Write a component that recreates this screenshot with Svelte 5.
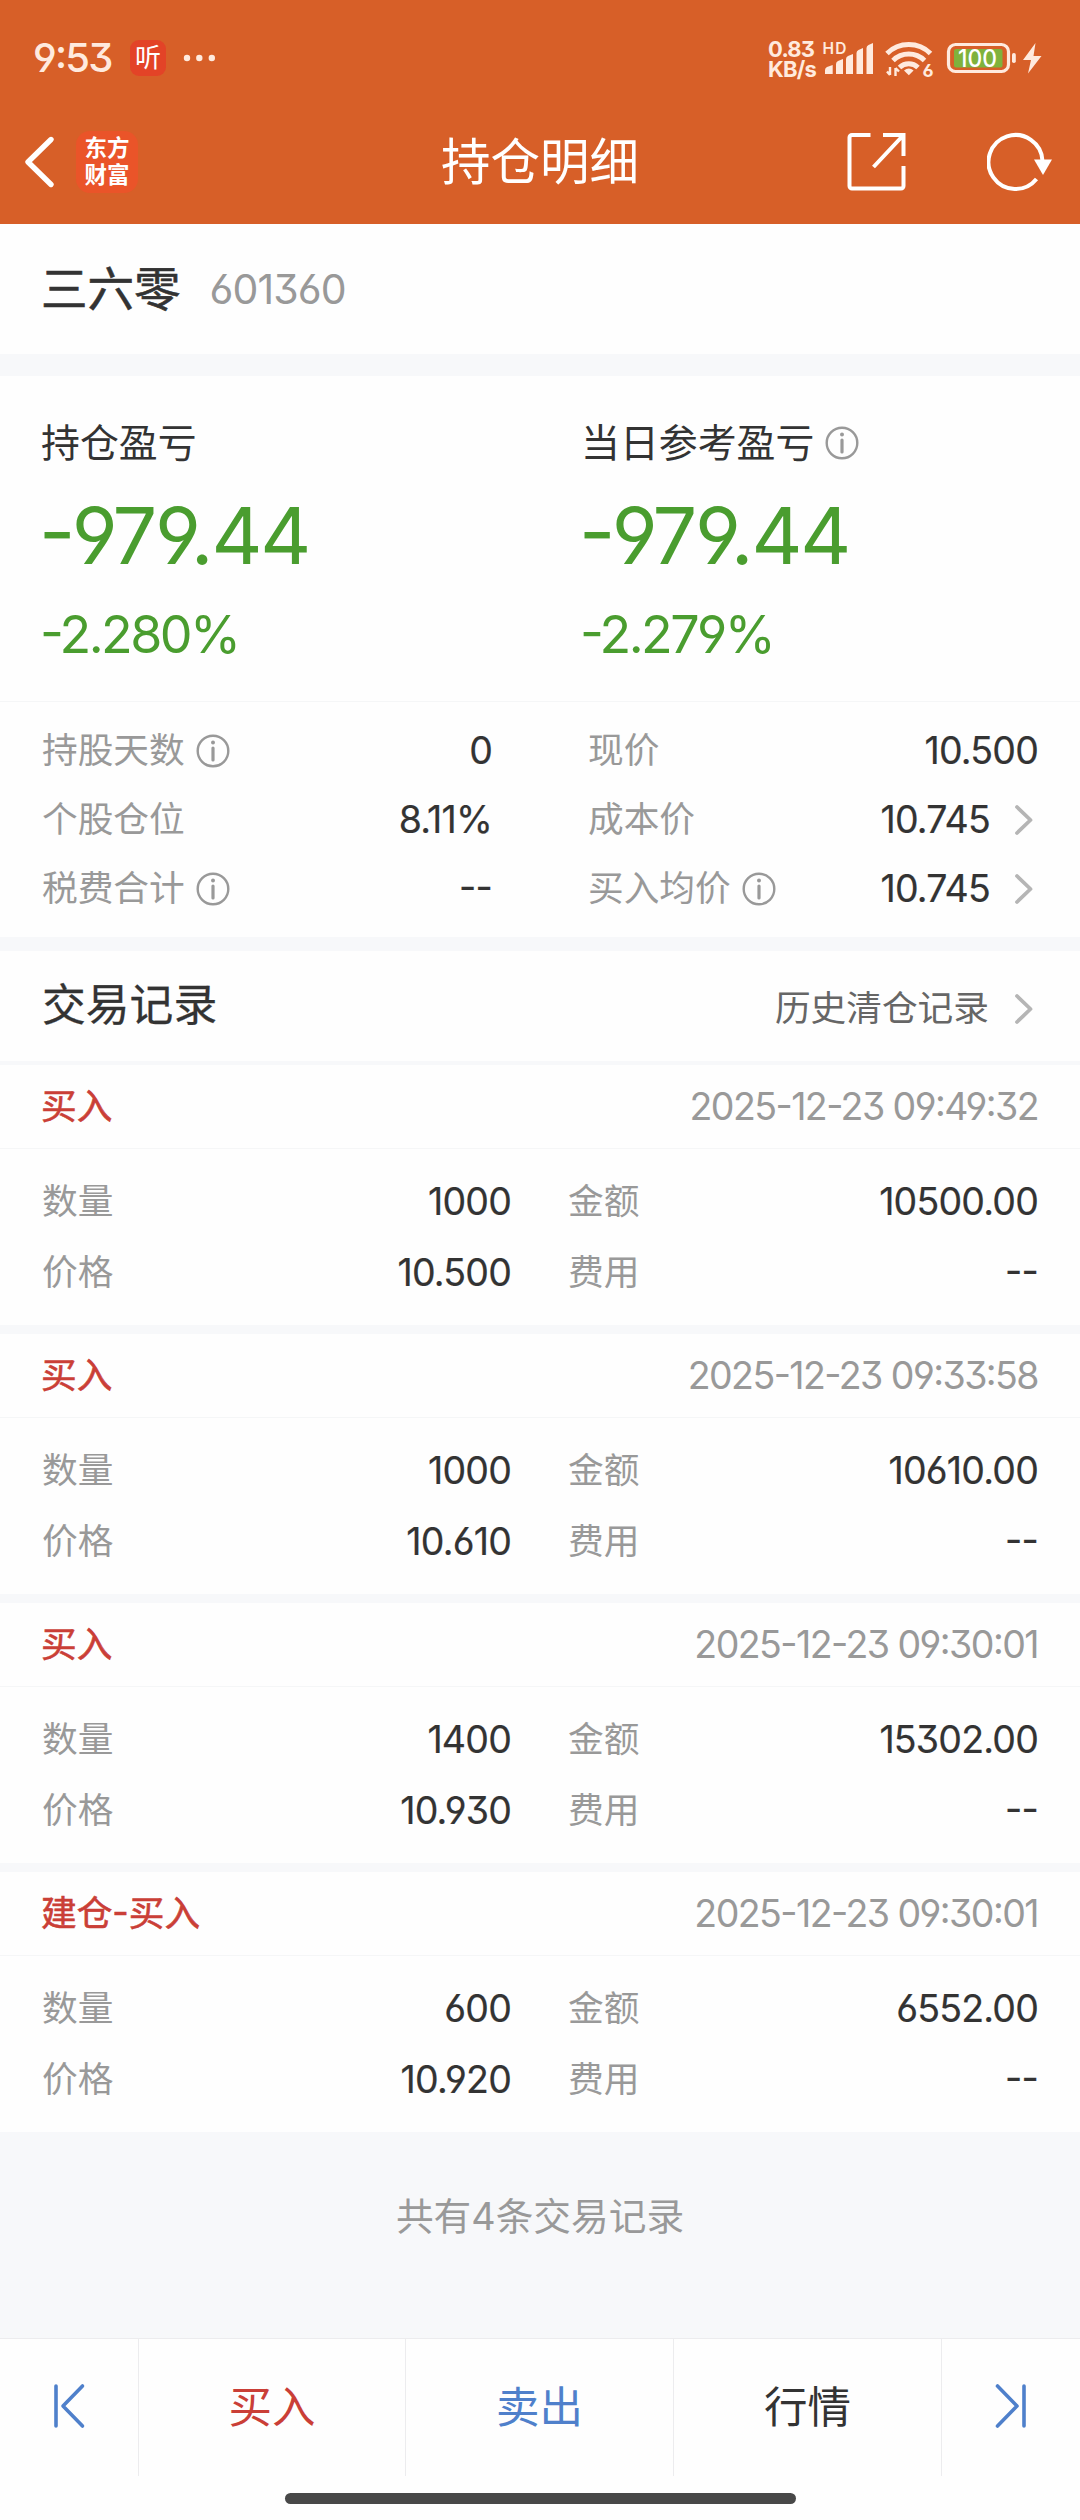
<script>
    const details = [
        {label: "持股天数", value: "0", info: true},
        {label: "现价", value: "10.500"},
        {label: "个股仓位", value: "8.11%"},
        {label: "成本价", value: "10.745", arrow: true},
        {label: "税费合计", value: "--", info: true},
        {label: "买入均价", value: "10.745", info: true, arrow: true},
    ];

    const records = [
        {type: "买入", time: "2025-12-23 09:49:32", amount: "1000", money: "10500.00", price: "10.500", fee: "--"},
        {type: "买入", time: "2025-12-23 09:33:58", amount: "1000", money: "10610.00", price: "10.610", fee: "--"},
        {type: "买入", time: "2025-12-23 09:30:01", amount: "1400", money: "15302.00", price: "10.930", fee: "--"},
        {type: "建仓-买入", time: "2025-12-23 09:30:01", amount: "600", money: "6552.00", price: "10.920", fee: "--"},
    ];
</script>

{#snippet infoIcon()}
    <svg class="info" width="34" height="34" viewBox="0 0 34 34">
        <circle cx="17" cy="17" r="15.3" fill="none" stroke="#999" stroke-width="2.4"/>
        <circle cx="17" cy="8.6" r="2" fill="#999"/>
        <path d="M17 14v12" stroke="#999" stroke-width="3.2" stroke-linecap="round"/>
    </svg>
{/snippet}

{#snippet chevron()}
    <svg class="chevron" width="20" height="32" viewBox="0 0 20 32">
        <path d="M3 3l13.5 13L3 29" fill="none" stroke="#b5b5b5" stroke-width="3.8" stroke-linecap="round" stroke-linejoin="round"/>
    </svg>
{/snippet}

<div class="page">
    <header>
        <div class="status">
            <span class="clock">9:53</span>
            <span class="listen">听</span>
            <svg class="dots" width="32" height="8" viewBox="0 0 32 8" fill="#ffeade">
                <circle cx="4" cy="4" r="3.2"/>
                <circle cx="16.3" cy="4" r="3.2"/>
                <circle cx="28.8" cy="4" r="3.2"/>
            </svg>
            <div class="speed">0.83<br>KB/s</div>
            <svg class="signals" width="226" height="44" viewBox="820 36 226 44" fill="#ffeade">
                <text x="822.5" y="54.3" font-size="15.5" font-weight="600" textLength="24">HD</text>
                <path d="M825 74v-4q0-2 2-3l5.700-2v9z"/>
                <path d="M836 74v-10q0-2 2-3l5-2v15z"/>
                <path d="M846 74v-15q0-2 2-3l5-2v20z"/>
                <path d="M856.500 74v-21q0-2 2-3l4.500-2v26z"/>
                <path d="M866.500 74v-26q0-2 2-3l4.500-2v31z"/>
                <g fill="none" stroke="#ffeade" stroke-width="5">
                    <path d="M887 53.500a31 31 0 0 1 43.500 0"/>
                    <path d="M893 60.500a22.500 22.500 0 0 1 31.500 0"/>
                    <path d="M899.500 67.500a13.500 13.500 0 0 1 18.500 0"/>
                </g>
                <path d="M904 70.500q4.800-4 9.600 0l-4.800 4.700z"/>
                <path d="M890 67v8M887 71.500l3 3.500M895.500 76v-8M895.500 68l3.500 3.500" fill="none" stroke="#ffeade" stroke-width="2.400"/>
                <text x="922.500" y="76.500" font-size="18" font-weight="700" stroke="#d75f28" stroke-width="3" paint-order="stroke">6</text>
                <rect x="948.500" y="44.500" width="60" height="27" rx="7" fill="none" stroke="#ffeade" stroke-width="3.200"/>
                <rect x="954" y="49" width="48.500" height="18.500" rx="2" fill="#7fb23c"/>
                <text x="958" y="67" font-size="24" font-weight="500" fill="#fff" textLength="39" lengthAdjust="spacingAndGlyphs">100</text>
                <rect x="1012" y="53" width="3.800" height="10" rx="1.800"/>
                <path d="M1035.500 43l-12.500 17h8l-3 13.500 13.500-17.500h-8z"/>
            </svg>
        </div>
        <div class="nav">
            <svg class="back" width="36" height="60" viewBox="0 0 36 60">
                <path d="M31 7.500L8 30l23 22.500" fill="none" stroke="#fff" stroke-width="5.400" stroke-linecap="round" stroke-linejoin="round"/>
            </svg>
            <div class="logo"><span>东方</span><span>财富</span></div>
            <h1>持仓明细</h1>
            <svg class="export" width="60" height="60" viewBox="0 0 60 60" fill="none" stroke="#fff" stroke-width="4">
                <path d="M24.500 3H6a2.500 2.500 0 0 0-2.500 2.500v48.500a2.500 2.500 0 0 0 2.500 2.500h49a2.500 2.500 0 0 0 2.500-2.500V34"/>
                <path d="M37 3h20.500V24M57.500 3L27.500 35"/>
            </svg>
            <svg class="refresh" width="68" height="60" viewBox="0 0 68 60">
                <path d="M55.500 29A27 27 0 1 0 49.500 47" fill="none" stroke="#fff" stroke-width="4"/>
                <path d="M47 27.500h18l-9 15.500z" fill="#fff"/>
            </svg>
        </div>
    </header>

    <section class="stock">
        <span class="name">三六零</span>
        <span class="code">601360</span>
    </section>

    <section class="profits">
        <div class="profit">
            <div class="caption">持仓盈亏</div>
            <div class="sum">-979.44</div>
            <div class="percent">-2.280%</div>
        </div>
        <div class="profit">
            <div class="caption">当日参考盈亏{@render infoIcon()}</div>
            <div class="sum">-979.44</div>
            <div class="percent">-2.279%</div>
        </div>
    </section>

    <section class="details">
        {#each details as item}
            <div class="detail">
                <span class="label">{item.label}</span>
                {#if item.info}{@render infoIcon()}{/if}
                <span class="value">{item.value}</span>
                {#if item.arrow}{@render chevron()}{/if}
            </div>
        {/each}
    </section>

    <section class="history">
        <h2>交易记录</h2>
        <span class="more">历史清仓记录</span>
        {@render chevron()}
    </section>

    {#each records as record}
        <section class="record">
            <div class="head">
                <span class="type">{record.type}</span>
                <span class="time">{record.time}</span>
            </div>
            <div class="cells">
                <span class="label">数量</span><span class="value">{record.amount}</span>
                <span class="label second">金额</span><span class="value">{record.money}</span>
                <span class="label">价格</span><span class="value">{record.price}</span>
                <span class="label second">费用</span><span class="value">{record.fee}</span>
            </div>
        </section>
    {/each}

    <div class="total">共有4条交易记录</div>

    <footer>
        <div class="tabs">
            <div class="tab">
                <svg width="34" height="48" viewBox="0 0 34 48" fill="none" stroke="#4f80cb" stroke-width="3.600" stroke-linecap="round" stroke-linejoin="round">
                    <path d="M4 4v40M30.500 4L11 24l19.500 20"/>
                </svg>
            </div>
            <div class="tab buy">买入</div>
            <div class="tab sell">卖出</div>
            <div class="tab">行情</div>
            <div class="tab">
                <svg width="34" height="48" viewBox="0 0 34 48" fill="none" stroke="#4f80cb" stroke-width="3.600" stroke-linecap="round" stroke-linejoin="round">
                    <path d="M30 4v40M3.500 4L23 24L3.500 44"/>
                </svg>
            </div>
        </div>
        <div class="home"></div>
    </footer>
</div>

<style>
    :global(body) {
        background: #f7f8fa;
    }

    .page {
        width: 1080px;
        height: 2520px;
        display: flex;
        flex-direction: column;
        overflow: hidden;
        background: #f7f8fa;
        color: #333;
        font-family: "Inter", "Noto Sans CJK SC", sans-serif;
        font-feature-settings: "cv03", "cv04", "cv09", "case";
        font-size: 35.7px;
        line-height: 1;
    }

    section, header, footer {
        box-sizing: border-box;
        flex: none;
    }

    section {
        background: #fefefe;
    }

    header {
        height: 224px;
        background: #d75f28;
        color: #fff;
    }

    .status {
        height: 116px;
        display: flex;
        align-items: center;
        padding-left: 33px;
        color: #ffeade;
    }

    .clock {
        width: 97px;
        font-size: 40px;
        font-weight: 500;
        letter-spacing: -1.8px;
    }

    .listen {
        width: 36px;
        height: 36px;
        border-radius: 9px;
        background: #e34327;
        color: #fff;
        font-size: 26px;
        line-height: 36px;
        text-align: center;
    }

    .dots {
        margin-left: 17px;
    }

    .speed {
        width: 52px;
        margin-left: 553px;
        font-size: 22px;
        font-weight: 700;
        line-height: 19.5px;
        letter-spacing: -0.8px;
        padding-top: 3px;
    }

    .signals {
        flex: none;
    }

    .nav {
        height: 92px;
        display: grid;
        grid-template-columns: 56px 62px 1fr 60px 81px 68px 25px;
        align-items: center;
    }

    .back {
        margin-left: 20px;
    }

    .logo {
        width: 62px;
        height: 62px;
        margin-left: 20px;
        padding-top: 3px;
        box-sizing: border-box;
        border-radius: 14px;
        background: #ea5429;
        display: flex;
        flex-direction: column;
        align-items: center;
        font-size: 22.5px;
        font-weight: 700;
        line-height: 27px;
    }

    h1 {
        margin: 0;
        grid-column: 3;
        font-size: 49.5px;
        font-weight: 400;
        padding: 2px 0 0 323px;
    }

    .refresh {
        grid-column: 6;
    }

    .stock {
        height: 130px;
        display: flex;
        align-items: center;
        padding-left: 41px;
    }

    .name {
        font-size: 46.5px;
        -webkit-text-stroke: 0.6px #333;
    }

    .code {
        margin-left: 29px;
        padding-top: 1px;
        font-size: 41px;
        color: #999;
        letter-spacing: -0.9px;
    }

    .profits {
        height: 326px;
        margin-top: 22px;
        padding-top: 40px;
        display: grid;
        grid-template-columns: 1fr 1fr;
        border-bottom: 1px solid #f5f6f7;
    }

    .profit {
        padding-left: 41px;
    }

    .caption {
        display: flex;
        align-items: center;
        height: 53px;
        padding-top: 1px;
        box-sizing: border-box;
        font-size: 38.9px;
    }

    .info {
        margin-left: 11px;
        flex: none;
    }

    .sum {
        margin: 11px 0 0 -2px;
        font-size: 79px;
        line-height: 110px;
        color: #4a9d2f;
        letter-spacing: -2.2px;
    }

    .percent {
        margin: 10px 0 0 -1px;
        font-size: 52px;
        line-height: 70px;
        color: #4a9d2f;
        letter-spacing: -2.6px;
    }

    .details {
        height: 235px;
        padding: 14px 42px 0;
        display: grid;
        grid-template-columns: 450px 450px;
        grid-auto-rows: 69px;
        justify-content: space-between;
    }

    .detail {
        display: flex;
        align-items: center;
    }

    .label {
        color: #999;
    }

    .value {
        margin-left: auto;
        padding-top: 1px;
        font-size: 37.5px;
        letter-spacing: -0.8px;
        -webkit-text-stroke: 0.2px #333;
    }

    .chevron {
        flex: none;
        margin: 0 4px 0 24px;
    }

    .history {
        height: 110px;
        margin-top: 14px;
        padding: 0 42px;
        display: flex;
        align-items: center;
    }

    h2 {
        margin: 0 auto 0 0;
        font-size: 43.8px;
        font-weight: 400;
        -webkit-text-stroke: 0.3px #333;
    }

    .more {
        color: #666;
        padding-top: 5px;
    }

    .history .chevron {
        margin-top: 5px;
        margin-left: 25px;
    }

    .record {
        height: 260px;
        margin-bottom: 9px;
    }

    .history + .record {
        margin-top: 4px;
    }

    .head {
        height: 83px;
        padding: 0 42px 0 41px;
        display: flex;
        align-items: center;
        justify-content: space-between;
        border-bottom: 1px solid #f5f6f7;
    }

    .type {
        color: #ca3f37;
        -webkit-text-stroke: 0.6px #ca3f37;
    }

    .time {
        padding-top: 1px;
        color: #999;
        font-size: 37.5px;
        letter-spacing: -1.55px;
    }

    .cells {
        padding: 17px 42px 0;
        display: grid;
        grid-template-columns: 120px 349px 57px 120px 1fr;
        grid-auto-rows: 71px;
        align-items: center;
    }

    .second {
        grid-column: 4;
    }

    .total {
        height: 206px;
        margin-top: -9px;
        box-sizing: border-box;
        padding-top: 63px;
        text-align: center;
        font-size: 37.7px;
        line-height: 42px;
        color: #999;
    }

    footer {
        flex: 1;
        background: #fefefe;
        border-top: 1px solid #ececee;
    }

    .tabs {
        height: 137px;
        display: grid;
        grid-template-columns: 138px 267px 268px 268px 139px;
    }

    .tab {
        display: flex;
        align-items: center;
        justify-content: center;
        border-left: 1px solid #ececee;
        font-size: 43.5px;
    }

    .tab:first-child {
        border-left: 0;
    }

    .tab svg {
        margin-bottom: 3px;
    }

    .buy {
        color: #ca3f37;
    }

    .sell {
        color: #4f80cb;
    }

    .home {
        width: 511px;
        height: 11px;
        margin: 17px auto 0;
        border-radius: 6px;
        background: #484848;
    }
</style>
